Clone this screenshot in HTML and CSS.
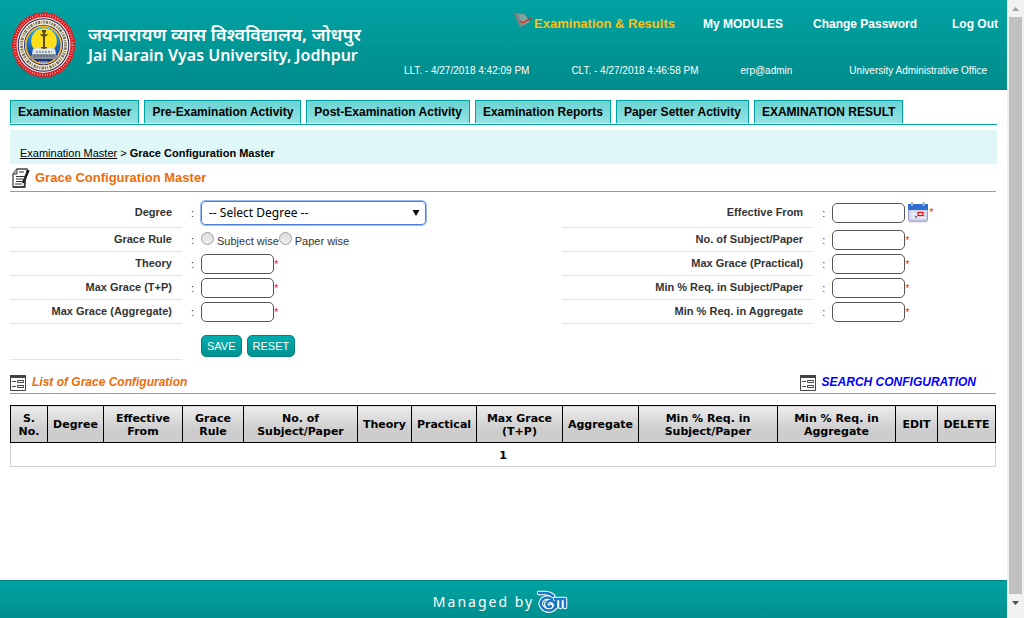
FILE: index.html
```html
<!DOCTYPE html>
<html lang="en">
<head>
<meta charset="utf-8">
<title>Grace Configuration Master</title>
<link rel="stylesheet" href="styles.css">
</head>
<body>
<div class="site">
  <header class="header">
    <div class="brand">
      <svg class="seal" viewBox="0 0 66 68" aria-hidden="true">
        <defs>
          <linearGradient id="sky" x1="0" y1="0" x2="0" y2="1"><stop offset="0" stop-color="#2ab0ea"/><stop offset=".6" stop-color="#1465b8"/><stop offset="1" stop-color="#16257c"/></linearGradient>
        </defs>
        <ellipse cx="33.500" cy="34" rx="31" ry="32" fill="#d9161d"/>
        <ellipse cx="33.500" cy="34" rx="31" ry="32" fill="none" stroke="#e0242a" stroke-width="1.6" stroke-dasharray="1.6 1"/>
        <ellipse cx="33.500" cy="34" rx="29" ry="30" fill="none" stroke="#f6c6c0" stroke-width="2" stroke-dasharray=".8 1.8"/>
        <ellipse cx="33.500" cy="34" rx="27" ry="28" fill="#f4ece0"/>
        <ellipse cx="33.500" cy="34" rx="25.800" ry="26.800" fill="#1f2462"/>
        <ellipse cx="33.500" cy="34" rx="24.800" ry="25.800" fill="#f7efcf"/>
        <ellipse cx="33.500" cy="34" rx="22" ry="23" fill="none" stroke="#77736a" stroke-width="3" stroke-dasharray="1.5 .9 2.4 1.200 1 1.1"/>
        <ellipse cx="33.500" cy="34" rx="19.500" ry="20.300" fill="#1f2462"/>
        <ellipse cx="33.500" cy="34" rx="18.700" ry="19.500" fill="#f6b73c"/>
        <ellipse cx="33.500" cy="34" rx="17" ry="17.800" fill="url(#sky)"/>
        <circle cx="34" cy="30" r="12.800" fill="#ffdf1a"/>
        <path d="M33 21h2v18h-2zM29.500 22.500q4.500 2 9 0l-2.500 3h-4zM32 19h4v2.500h-4zM31 36h6v3h-6z" fill="#5b4a17"/>
        <path d="M23 38q5-2 11 0 6-2 11 0l1 5H22z" fill="#dfe6ea"/>
        <path d="M22 43h24l2 5H20z" fill="#858d98"/>
        <path d="M26 41h16M24 45h20" stroke="#4c5968" stroke-dasharray="2 1"/>
        <path d="M29 51h9" stroke="#c9d1ee" stroke-width="1.6" stroke-dasharray="1.4 .8"/>
      </svg>
      <div class="names">
        <div class="name-hi" lang="hi">जयनारायण व्यास विश्वविद्यालय, जोधपुर</div>
        <div class="name-en">Jai Narain Vyas University, Jodhpur</div>
      </div>
    </div>
    <div class="top">
      <nav class="top-nav" aria-label="Account">
        <a class="module" href="#">
          <svg class="module-icon" viewBox="0 0 18 16" aria-hidden="true">
            <path d="M0 1l11 1 5 8-10 5z" fill="#7fa5a3" stroke="#5d7d7b" stroke-width=".8"/>
            <path d="M0 1l4 1 4 12-2 1z" fill="#788383"/>
            <path d="M6 9l3 2 8-5" fill="none" stroke="#e32218" stroke-width="1.300"/>
          </svg>
          <span>Examination &amp; Results</span>
        </a>
        <a class="modules" href="#">My MODULES</a>
        <a class="password" href="#">Change Password</a>
        <a class="logout" href="#">Log Out</a>
      </nav>
      <div class="session">
        <span>LLT. - 4/27/2018 4:42:09 PM</span>
        <span>CLT. - 4/27/2018 4:46:58 PM</span>
        <span>erp@admin</span>
        <span>University Administrative Office</span>
      </div>
    </div>
  </header>

  <main class="main">
    <nav class="tabs" aria-label="Sections">
      <a href="#">Examination Master</a>
      <a href="#">Pre-Examination Activity</a>
      <a href="#">Post-Examination Activity</a>
      <a href="#">Examination Reports</a>
      <a href="#">Paper Setter Activity</a>
      <a href="#">EXAMINATION RESULT</a>
    </nav>
    <div class="crumbs"><a href="#">Examination Master</a> &gt; <b>Grace Configuration Master</b></div>

    <div class="content">
      <h1 class="title">
        <svg class="title-icon" viewBox="0 0 18 20" aria-hidden="true">
          <path d="M5 1h10v3l-3 15H1V6z" fill="#fff" stroke="#444" stroke-width="1.3"/>
          <path d="M1 6h4V1" fill="#bbb" stroke="#444"/>
          <path d="M7 4h5M4 8.5h8M4 11h7M4 13.500h6M3 16h7" stroke="#333" stroke-width="1.2"/>
          <path d="M16.500 2l-5.500 13" stroke="#111" stroke-width="2.4"/>
          <path d="M1 19h12V8" fill="none" stroke="#333" stroke-width="1.4"/>
        </svg>
        Grace Configuration Master
      </h1>

      <form class="form">
        <div class="col col-left">
          <div class="row tall"><label class="lab" for="degree">Degree</label><span class="colon">:</span>
            <div class="field"><div class="select"><select id="degree"><option>-- Select Degree --</option></select><svg class="arrow" viewBox="0 0 8 6" aria-hidden="true"><path d="M.5 0h7L4 6z"/></svg></div></div></div>
          <div class="row"><span class="lab" id="rule">Grace Rule</span><span class="colon">:</span>
            <div class="field radios" role="radiogroup" aria-labelledby="rule">
              <input type="radio" name="rule" id="subject"><label for="subject">Subject wise</label>
              <input type="radio" name="rule" id="paper"><label for="paper">Paper wise</label>
            </div></div>
          <div class="row"><label class="lab" for="theory">Theory</label><span class="colon">:</span>
            <div class="field"><input type="text" id="theory"><i class="req">*</i></div></div>
          <div class="row"><label class="lab" for="maxtp">Max Grace (T+P)</label><span class="colon">:</span>
            <div class="field"><input type="text" id="maxtp"><i class="req">*</i></div></div>
          <div class="row"><label class="lab" for="maxagg">Max Grace (Aggregate)</label><span class="colon">:</span>
            <div class="field"><input type="text" id="maxagg"><i class="req">*</i></div></div>
          <div class="row tall"><span class="lab"></span><span class="colon"></span>
            <div class="field buttons"><button type="button">SAVE</button><button type="reset">RESET</button></div></div>
        </div>
        <div class="col col-right">
          <div class="row tall"><label class="lab" for="from">Effective From</label><span class="colon">:</span>
            <div class="field"><input type="text" id="from">
              <button class="cal" type="button" aria-label="Pick a date">
                <svg viewBox="0 0 20 21" aria-hidden="true">
                  <path d="M1 19.500h18" stroke="#d5d5dc" stroke-width="2"/>
                  <rect x=".5" y="3" width="19" height="16" rx="1" fill="#d3d5ea" stroke="#9a9cc9"/>
                  <path d="M0 2h20v6H0z" fill="#2c6fd0"/>
                  <path d="M2 12h16M2 15.500h16M5.500 9v9M9 9v9M14 9v9" stroke="#f4f4fb"/>
                  <path d="M4 0v4M15.500 0v4" stroke="#a9b4c8" stroke-width="2"/>
                  <path d="M7 14h2v2H7z" fill="#7a7f9c"/>
                  <rect x="10" y="10.500" width="5" height="3" fill="#fff" stroke="#e50d0d" stroke-width="1.3"/>
                </svg>
              </button><i class="req">*</i></div></div>
          <div class="row"><label class="lab" for="count">No. of Subject/Paper</label><span class="colon">:</span>
            <div class="field"><input type="text" id="count"><i class="req">*</i></div></div>
          <div class="row"><label class="lab" for="practical">Max Grace (Practical)</label><span class="colon">:</span>
            <div class="field"><input type="text" id="practical"><i class="req">*</i></div></div>
          <div class="row"><label class="lab" for="minsub">Min % Req. in Subject/Paper</label><span class="colon">:</span>
            <div class="field"><input type="text" id="minsub"><i class="req">*</i></div></div>
          <div class="row"><label class="lab" for="minagg">Min % Req. in Aggregate</label><span class="colon">:</span>
            <div class="field"><input type="text" id="minagg"><i class="req">*</i></div></div>
        </div>
      </form>

      <div class="list-head">
        <h2>
          <svg class="list-icon" viewBox="0 0 16 16" aria-hidden="true"><path d="M.5.500h15v15H.5z" fill="#fff" stroke="#444"/><path d="M0 0h16v3H0z" fill="#444"/><path d="M2 6.500h4M2 11.500h4" stroke="#444"/><path d="M7.500 5.500h6v2h-6zM7.500 10.500h6v2h-6z" fill="none" stroke="#444"/></svg>
          List of Grace Configuration
        </h2>
        <a class="search" href="#">
          <svg class="list-icon" viewBox="0 0 16 16" aria-hidden="true"><path d="M.5.500h15v15H.5z" fill="#fff" stroke="#444"/><path d="M0 0h16v3H0z" fill="#444"/><path d="M2 6.500h4M2 11.500h4" stroke="#444"/><path d="M7.500 5.500h6v2h-6zM7.500 10.500h6v2h-6z" fill="none" stroke="#444"/></svg>
          SEARCH CONFIGURATION
        </a>
      </div>

      <table class="grid">
        <colgroup><col class="c-no"><col class="c-degree"><col class="c-from"><col class="c-rule"><col class="c-count"><col class="c-theory"><col class="c-prac"><col class="c-max"><col class="c-agg"><col class="c-minsub"><col class="c-minagg"><col class="c-edit"><col class="c-del"></colgroup>
        <thead><tr>
          <th>S.<br>No.</th><th>Degree</th><th>Effective<br>From</th><th>Grace<br>Rule</th><th>No. of<br>Subject/Paper</th><th>Theory</th><th>Practical</th><th>Max Grace<br>(T+P)</th><th>Aggregate</th><th>Min % Req. in<br>Subject/Paper</th><th>Min % Req. in<br>Aggregate</th><th>EDIT</th><th>DELETE</th>
        </tr></thead>
        <tbody><tr><td colspan="13">1</td></tr></tbody>
      </table>
    </div>
  </main>

  <footer class="footer">
    <span>Managed by</span>
    <svg class="footer-logo" viewBox="0 0 31 24" aria-hidden="true">
      <g fill="none" stroke-linecap="round" stroke-linejoin="round">
        <g stroke="#fff" stroke-width="4.6">
          <path d="M2 3h6q5 0 8 3M15 9q-5-3-9 0-4 4-1 8 4 5 10 3 4-2 3-6-2-4-6-3-4 2-2 5 2 2 4 0M18 9h10M19 9v8M23.500 9v8M28 9v8"/>
        </g>
        <g stroke="#1976c9" stroke-width="2.5">
          <path d="M2 3h6q5 0 8 3M15 9q-5-3-9 0-4 4-1 8 4 5 10 3 4-2 3-6-2-4-6-3-4 2-2 5 2 2 4 0M18 9h10M19 9v8M23.500 9v8M28 9v8"/>
        </g>
      </g>
    </svg>
  </footer>
</div>

<div class="scrollbar" aria-hidden="true">
  <svg viewBox="0 0 17 17"><path d="M5 11h7L8.500 7z" fill="#a3a3a3"/></svg>
  <div class="thumb"></div>
  <svg viewBox="0 0 17 17"><path d="M5 7h7l-3.500 4z" fill="#505050"/></svg>
</div>
</body>
</html>
```
FILE: styles.css
```css
* { box-sizing: border-box; }
body { margin: 0; display: flex; min-height: 100vh; background: #fff; color: #000; font: 11px/14px "Liberation Sans", Arial, sans-serif; }
a { color: inherit; text-decoration: none; }
svg { display: block; flex: none; }

.site { flex: 1; min-width: 0; display: flex; flex-direction: column; }

.header { display: flex; justify-content: space-between; min-height: 90px; padding-left: 10px; color: #fff; background: linear-gradient(#00a3a3, #008b8b); }
.brand { display: flex; align-items: center; gap: 12px; }
.seal { width: 66px; height: 68px; }
.names { padding-bottom: 3px; font-family: "Noto Sans", "Open Sans", sans-serif; font-weight: 600; white-space: nowrap; }
.name-hi { font-size: 18px; line-height: 22px; }
.name-en { font-size: 16px; line-height: 20px; }

.top { display: flex; flex-direction: column; gap: 28px; padding: 12px 9px 0 0; white-space: nowrap; }
.top-nav { display: flex; justify-content: flex-end; align-items: center; font-size: 12px; line-height: 24px; font-weight: bold; }
.module { display: flex; margin-right: 28px; color: #fdc010; font-size: 13px; gap: 2px; }
.module-icon { width: 18px; height: 16px; }
.modules { margin-right: 30px; }
.password { margin-right: 35px; }
.session { display: flex; justify-content: flex-end; gap: 42px; padding-right: 11px; font-size: 10px; line-height: 14px; }
.session span:last-child { margin-left: 15px; }

.main { flex: 1; padding: 10px 10px 20px; }
.tabs { display: flex; gap: 5px; padding-bottom: 1px; border-bottom: 1px solid #00a3a3; }
.tabs a { padding: 0 7px; border: 1px solid #00a3a3; border-bottom: 0; background: linear-gradient(#6bd3d3, #93e2e2); font-size: 12px; line-height: 22px; font-weight: bold; white-space: nowrap; }
.crumbs { margin-top: 5px; padding: 16px 10px 4px; background: #dff7f7; }
.crumbs a { text-decoration: underline; }

.content { padding-right: 1px; }
.title { display: flex; align-items: center; gap: 5px; margin: 0; padding: 4px 2px 3px; border-bottom: 1px solid #48c0c0; color: #ee6c0b; font-size: 13px; line-height: 20px; font-weight: bold; }
.title-icon { width: 18px; height: 20px; }

.form { display: grid; grid-template-columns: 56% 44%; color: #333; }
.row { display: grid; grid-template-columns: 172px 19px 1fr; min-height: 24px; }
.col-right .row { grid-template-columns: 251px 19px 1fr; }
.row.tall { min-height: 36px; }
.lab { display: flex; align-items: center; justify-content: flex-end; padding: 0 10px 2px 0; border-bottom: 1px solid #e5e5e5; font-weight: bold; }
.tall .lab { padding-top: 6px; }
.colon { align-self: center; padding-left: 9px; }
.tall .colon { padding-top: 6px; }
.col-right .colon { color: #800080; }
.field { display: flex; align-items: center; }
.tall .field { padding-top: 5px; }
.field input[type="text"] { width: 73px; height: 20px; padding: 0 4px; border: 1px solid #555; border-radius: 5px; background: #fff; font: inherit; }
.select { display: grid; align-items: center; }
.select > * { grid-area: 1 / 1; }
.select select { appearance: none; width: 225px; height: 24px; padding: 0 20px 0 7px; border: 1px solid #4d7fd0; border-radius: 4px; outline: 1px solid #9bbcf2; background: #fff; color: #000; font: 12px "Noto Sans", sans-serif; }
.arrow { justify-self: end; width: 8px; height: 6px; margin-right: 6px; pointer-events: none; }
.req { padding-bottom: 1px; color: #f22; font-style: normal; }
.radios input { appearance: none; width: 13px; height: 13px; margin: 0 3px 4px 0; border: 1px solid #a0a0a0; border-radius: 50%; background: linear-gradient(#ddd, #eee); }
.radios label { padding-top: 2px; }
.buttons { gap: 5px; }
.buttons button { height: 22px; padding: 0 5px; border: 1px solid #00807f; border-radius: 5px; background: linear-gradient(#00adad, #009292); color: #fff; font: 11px "Liberation Sans", Arial, sans-serif; }
.tall .buttons { padding-top: 8px; }
.cal { width: 20px; height: 21px; margin: 0 1px 0 3px; padding: 0; border: 0; background: none; }

.list-head { display: flex; justify-content: space-between; padding: 14px 20px 2px 0; border-bottom: 1px solid #48c0c0; font-size: 12px; line-height: 16px; font-weight: bold; font-style: italic; }
.list-head h2, .search { display: flex; align-items: flex-start; gap: 6px; margin: 0; font: inherit; }
.list-head h2 { color: #ee6c0b; }
.search { color: #00f; }
.list-icon { width: 16px; height: 16px; margin-top: 1px; }

.grid { width: 100%; margin-top: 11px; table-layout: fixed; border-collapse: collapse; font: bold 11px/13px "DejaVu Sans", Verdana, sans-serif; text-align: center; }
.grid th { height: 37px; padding: 1px 0 0; border: 1px solid #000; background: linear-gradient(#ececec, #cdcdcd 65%, #cdcdcd); white-space: nowrap; }
.grid td { height: 24px; padding: 1px 0 0; border: 1px solid #d0d0d0; }
.c-no { width: 37px; }
.c-degree { width: 56px; }
.c-from { width: 79px; }
.c-rule { width: 61px; }
.c-count { width: 114px; }
.c-theory { width: 54px; }
.c-prac { width: 65px; }
.c-max { width: 86px; }
.c-agg { width: 76px; }
.c-minsub { width: 139px; }
.c-minagg { width: 118px; }
.c-edit { width: 42px; }
.c-del { width: 58px; }

.footer { display: flex; align-items: center; justify-content: center; gap: 3px; min-height: 38px; padding: 5px 6px 0 0; border-top: 1px solid #007f7f; background: linear-gradient(#00a3a3, #008f8f); color: #fff; font: 14px/18px "Noto Sans", sans-serif; letter-spacing: 2px; }
.footer-logo { width: 31px; height: 24px; }

.scrollbar { flex: none; display: flex; flex-direction: column; width: 17px; height: 100vh; background: #f1f1f1; }
.scrollbar svg { width: 17px; height: 17px; }
.thumb { height: 577px; flex: 0 1 auto; margin: 0 2px; background: #c1c1c1; }
```
